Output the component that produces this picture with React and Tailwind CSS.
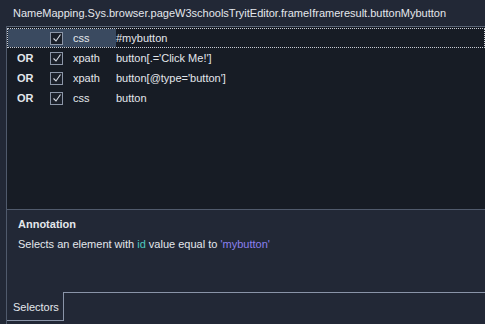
import { useState } from "react";

const rows = [
  { op: "", type: "css", value: "#mybutton" },
  { op: "OR", type: "xpath", value: "button[.='Click Me!']" },
  { op: "OR", type: "xpath", value: "button[@type='button']" },
  { op: "OR", type: "css", value: "button" },
];

function Check() {
  return (
    <div className="w-[13px] h-[13px] border border-[#8c96a8] bg-[#1b202a] flex items-center justify-center">
      <svg width="10" height="10" viewBox="0 0 10 10">
        <path d="M1.5 5.5 L4 8 L8.5 1.5" fill="none" stroke="#d8dce4" strokeWidth="1.1" />
      </svg>
    </div>
  );
}

export default function App() {
  const [selected] = useState(0);

  return (
    <div className="w-[485px] h-[324px] bg-[#222836] text-[#e4e7ec] text-[11px] flex flex-col overflow-hidden" style={{ fontFamily: '"Liberation Sans", Arial, sans-serif' }}>
      {/* Header */}
      <div className="h-[26px] flex items-center pl-[13px] shrink-0 whitespace-nowrap">
        NameMapping.Sys.browser.pageW3schoolsTryitEditor.frameIframeresult.buttonMybutton
      </div>

      {/* Body with left rule */}
      <div className="flex-1 ml-[6px] border-l border-[#505a6c] flex flex-col">
        {/* Grid */}
        <div className="h-[183px] bg-[#171c25] border-t border-[#5a6476] pt-[1px]">
          {rows.map((r, i) => (
            <div
              key={i}
              className={`h-[20px] flex items-center ${i === selected ? "border border-dotted border-[#c8ccd4]" : "border border-transparent"}`}
            >
              <div className={`flex items-center h-full w-[108px] ${i === selected ? "bg-[#3a4a60]" : ""}`}>
                <div className="w-[42px] pl-[9px] font-bold">{r.op}</div>
                <Check />
                <div className="pl-[10px]">{r.type}</div>
              </div>
              <div>{r.value}</div>
            </div>
          ))}
        </div>

        {/* Annotation */}
        <div className="h-[83px] border-t border-[#505a6c] px-[11px] pt-[6px]">
          <div className="font-bold">Annotation</div>
          <div className="mt-[3px]">
            Selects an element with <span className="text-[#4ec9c0]">id</span> value equal to{" "}
            <span className="text-[#8b80f0]">'mybutton'</span>
          </div>
        </div>

        {/* Tabs */}
        <div className="flex h-[29px]">
          <div className="w-[57px] border-r border-b border-[#8a94a8] flex items-center pl-[6px] pt-[2px]">Selectors</div>
          <div className="flex-1 border-t border-[#8a94a8] h-[1px]"></div>
        </div>
      </div>
    </div>
  );
}
